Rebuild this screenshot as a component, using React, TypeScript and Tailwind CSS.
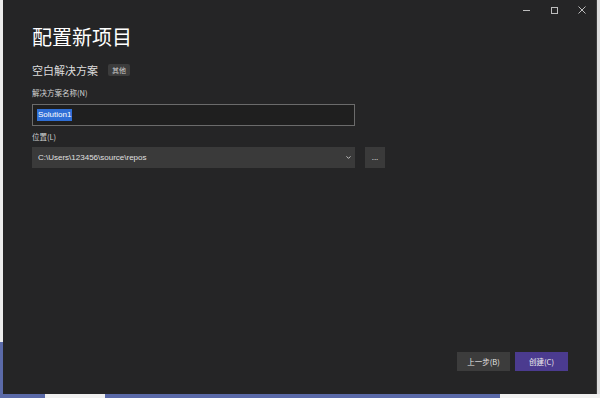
import { ChevronDown } from 'lucide-react';

const font = { fontFamily: '"Noto Sans CJK SC", "Noto Sans", sans-serif' };
const latin = { fontFamily: '"Liberation Sans", sans-serif' };

export default function App() {
  return (
    <div className="w-[600px] h-[398px] bg-[#e6e6e6] flex flex-col overflow-hidden" style={font}>
      <div className="flex flex-1 min-h-0">
        {/* left strip of the window behind */}
        <div className="w-[3px] flex flex-col">
          <div className="flex-1 bg-[#ececec]" />
          <div className="h-[52px] bg-[#5b6aa8]" />
        </div>

        {/* dialog */}
        <div className="w-[594px] bg-[#252526] flex flex-col border-r border-[#3c3c3c]">
          {/* title bar */}
          <div className="h-[20px] flex justify-end items-center text-[#bdbdbd]">
            <div className="w-[28px] h-[20px] flex items-center justify-center">
              <div className="w-[7px] h-px bg-[#bdbdbd]" />
            </div>
            <div className="w-[28px] h-[20px] flex items-center justify-center">
              <div className="w-[7px] h-[7px] border border-[#bdbdbd]" />
            </div>
            <div className="w-[28px] h-[20px] flex items-center justify-center">
              <svg width="8" height="8" viewBox="0 0 8 8" stroke="#bdbdbd" strokeWidth="1">
                <path d="M0.5 0.5 L7.5 7.5 M7.5 0.5 L0.5 7.5" />
              </svg>
            </div>
          </div>

          <div className="flex-1 flex flex-col pl-[29px] pr-[28px]">
            <h1 className="text-[20px] leading-[24px] text-white mt-[5px]">配置新项目</h1>

            <div className="flex items-center gap-[10px] mt-[13px]">
              <span className="text-[11px] leading-[16px] text-[#dcdcdc]">空白解决方案</span>
              <span className="bg-[#3c3c3c] text-[#cfcfcf] text-[7px] leading-[12px] px-[4px] rounded-[2px]">其他</span>
            </div>

            <div className="text-[7.5px] leading-[12px] text-[#d4d4d4] mt-[9px]">解决方案名称(N)</div>
            <div className="mt-[5px] w-[323px] h-[22px] border border-[#6b6b6b] bg-[#1f1f1f] flex items-center pl-[4px]">
              <span className="bg-[#2f6fd6] text-white text-[8px] leading-[12px] px-px" style={latin}>
                Solution1
              </span>
            </div>

            <div className="text-[7.5px] leading-[12px] text-[#d4d4d4] mt-[5px]">位置(L)</div>
            <div className="mt-[4px] flex items-center gap-[10px]">
              <div className="w-[323px] h-[21px] bg-[#3a3a3a] flex items-center justify-between pl-[6px] pr-[3px] text-[#e0e0e0]">
                <span className="text-[8px] leading-[12px]" style={latin}>
                  C:\Users\123456\source\repos
                </span>
                <ChevronDown size={7} strokeWidth={3} className="text-[#d0d0d0]" />
              </div>
              <div className="w-[20px] h-[21px] bg-[#3a3a3a] flex items-center justify-center text-[#cfcfcf] text-[8px] leading-[8px] pb-[2px]">
                ...
              </div>
            </div>

            <div className="flex-1" />

            <div className="flex justify-end gap-[5px] pb-[23px]">
              <div className="w-[53px] h-[19px] bg-[#3c3c3c] text-[#e6e6e6] text-[7.5px] flex items-center justify-center">
                上一步(B)
              </div>
              <div className="w-[53px] h-[19px] bg-[#4b3b8f] text-[#f0f0f0] text-[7.5px] flex items-center justify-center">
                创建(C)
              </div>
            </div>
          </div>
        </div>

        <div className="flex-1 bg-[#dedede]" />
      </div>

      {/* taskbar strip below */}
      <div className="h-[4px] flex">
        <div className="w-[45px] bg-[#5b6aa8]" />
        <div className="w-[60px] bg-[#f0f0f0]" />
        <div className="flex-1 bg-[#5b6aa8]" />
        <div className="w-[100px] bg-[#f0f0f0]" />
      </div>
    </div>
  );
}
